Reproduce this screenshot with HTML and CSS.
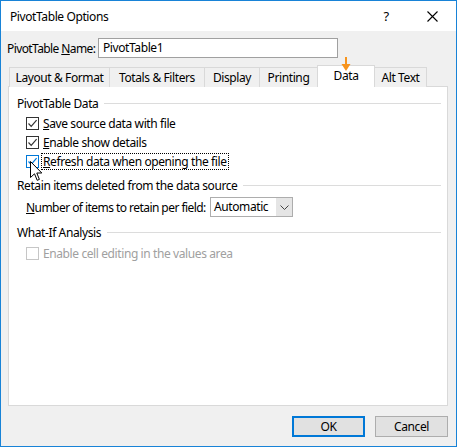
FILE: index.html
```html
<!DOCTYPE html>
<html>
<head>
<meta charset="utf-8">
<link rel="stylesheet" href="styles.css">
</head>
<body>
<div class="window">
  <div class="titlebar">
    <span class="title">PivotTable Options</span>
    <span class="help">?</span>
    <span class="close">
      <svg width="11" height="11" viewBox="0 0 11 11"><path d="M0.5 0.5 L10.5 10.5 M10.5 0.5 L0.5 10.5" stroke="#000" stroke-width="1.1" fill="none"/></svg>
    </span>
  </div>
  <div class="content">
    <div class="name-row">
      <span class="name-label">PivotTable <u>N</u>ame:</span>
      <div class="textbox">PivotTable1</div>
    </div>
    <div class="tabs">
      <div class="tab w1">Layout &amp; Format</div>
      <div class="tab w2">Totals &amp; Filters</div>
      <div class="tab w3">Display</div>
      <div class="tab w4">Printing</div>
      <div class="tab selected w5">Data
        <svg class="marker" width="10" height="15" viewBox="0 0 10 15"><path d="M5 0 V9" stroke="#f7941d" stroke-width="2"/><path d="M0.5 7 L9.5 7 L5 14 Z" fill="#f7941d"/></svg>
      </div>
      <div class="tab w6">Alt Text</div>
    </div>
    <div class="panel">
      <div class="group-head"><span>PivotTable Data</span><i class="rule"></i></div>
      <div class="check-row first">
        <span class="box"><svg width="11" height="11" viewBox="0 0 11 11"><path d="M1.5 5.5 L4.2 8.3 L9.6 2.2" stroke="#333" stroke-width="1.2" fill="none"/></svg></span>
        <span class="label"><u>S</u>ave source data with file</span>
      </div>
      <div class="check-row">
        <span class="box"><svg width="11" height="11" viewBox="0 0 11 11"><path d="M1.5 5.5 L4.2 8.3 L9.6 2.2" stroke="#333" stroke-width="1.2" fill="none"/></svg></span>
        <span class="label"><u>E</u>nable show details</span>
      </div>
      <div class="check-row">
        <span class="box hot"><svg width="11" height="11" viewBox="0 0 11 11"><path d="M1.5 5.5 L4.2 8.3 L9.6 2.2" stroke="#0078d7" stroke-width="1.2" fill="none"/></svg></span>
        <span class="label focus"><u>R</u>efresh data when opening the file</span>
        <svg class="cursor" width="13" height="21" viewBox="0 0 13 21"><path d="M0.5 0.5 L0.5 16.5 L4.5 12.8 L7.2 19.3 L9.4 18.4 L6.8 12 L11.8 12 Z" fill="#fff" stroke="#000" stroke-width="1" stroke-linejoin="miter"/></svg>
      </div>
      <div class="group-head second"><span>Retain items deleted from the data source</span><i class="rule"></i></div>
      <div class="select-row">
        <span class="select-label"><u>N</u>umber of items to retain per field:</span>
        <div class="select">
          <span class="select-value">Automatic</span>
          <span class="select-btn"><svg width="9" height="5" viewBox="0 0 9 5"><path d="M0.5 0.5 L4.5 4.5 L8.5 0.5" stroke="#444" stroke-width="1" fill="none"/></svg></span>
        </div>
      </div>
      <div class="group-head third"><span>What-If Analysis</span><i class="rule"></i></div>
      <div class="check-row disabled">
        <span class="box off"></span>
        <span class="label">Enable cell editing in the values area</span>
      </div>
    </div>
    <div class="buttons">
      <div class="btn default">OK</div>
      <div class="btn">Cancel</div>
    </div>
  </div>
</div>
</body>
</html>
```
FILE: styles.css
```css
html, body {
  margin: 0;
  padding: 0;
}
body {
  font-family: "Noto Sans", "Open Sans", sans-serif;
  font-size: 12px;
  letter-spacing: -0.4px;
  color: #000;
  background: #f0f0f0;
}
.window {
  box-sizing: border-box;
  width: 457px;
  height: 447px;
  border: 1px solid #1883d7;
  background: #f0f0f0;
  display: flex;
  flex-direction: column;
}
.titlebar {
  height: 30px;
  background: #fff;
  display: flex;
  align-items: center;
  padding-left: 9px;
  flex-shrink: 0;
}
.title {
  font-size: 12px;
  flex: 1;
}
.help {
  width: 46px;
  text-align: center;
  font-size: 13px;
  padding-left: 4px;
}
.close {
  width: 46px;
  display: flex;
  justify-content: center;
  align-items: center;
  padding-right: 1px;
}
.content {
  padding: 7px 9px 0 6px;
  display: flex;
  flex-direction: column;
}
.name-row {
  display: flex;
  align-items: center;
  height: 20px;
}
.name-label {
  width: 91px;
  white-space: nowrap;
  letter-spacing: -0.6px;
  box-sizing: border-box;
}
.textbox {
  box-sizing: border-box;
  width: 240px;
  height: 20px;
  border: 1px solid #a0a0a0;
  background: #fff;
  padding-left: 4px;
  line-height: 18px;
}
.tabs {
  display: flex;
  align-items: flex-end;
  height: 22px;
  margin-top: 7px;
  padding-left: 2px;
  position: relative;
  z-index: 1;
  margin-bottom: -1px;
}
.tab {
  box-sizing: border-box;
  height: 20px;
  border: 1px solid #d9d9d9;
  border-bottom: none;
  margin-left: -1px;
  text-align: center;
  line-height: 19px;
  background: #f0f0f0;
  white-space: nowrap;
}
.tab:first-child { margin-left: 0; }
.tab.selected {
  height: 22px;
  background: #fff;
  position: relative;
  line-height: 19px;
  z-index: 2;
}
.marker {
  position: absolute;
  left: 23px;
  top: -9px;
}
.w1 { width: 101px; }
.w2 { width: 96px; }
.w3 { width: 56px; }
.w4 { width: 59px; }
.w5 { width: 58px; }
.w6 { width: 53px; }
.panel {
  box-sizing: border-box;
  width: 440px;
  height: 320px;
  border: 1px solid #d9d9d9;
  background: #fff;
  padding: 8px 6px 0 8px;
  margin-left: 1px;
}
.group-head {
  display: flex;
  align-items: center;
  height: 16px;
}
.group-head span {
  white-space: nowrap;
  margin-right: 6px;
}
.group-head .rule {
  flex: 1;
  height: 1px;
  background: #dcdcdc;
}
.group-head.second { margin-top: 6px; }
.group-head.third { margin-top: 7px; }
.check-row {
  display: flex;
  align-items: center;
  height: 19px;
  padding-left: 9px;
  position: relative;
}
.check-row.first { margin-top: 3px; }
.box {
  box-sizing: border-box;
  width: 13px;
  height: 13px;
  border: 1px solid #333;
  background: #fff;
  display: flex;
  align-items: center;
  justify-content: center;
  margin-right: 4px;
  flex-shrink: 0;
}
.box.hot { border-color: #0078d7; }
.box.off { border-color: #c6c6c6; }
.label {
  white-space: nowrap;
  padding: 0 1px;
  margin-left: -1px;
}
.label.focus {
  outline: 1px dotted #000;
  outline-offset: 0;
  line-height: 15px;
}
.disabled { margin-top: 4px; }
.disabled .label { color: #a0a0a0; }
.cursor {
  position: absolute;
  left: 13px;
  top: 9px;
}
.select-row {
  display: flex;
  align-items: center;
  height: 20px;
  margin-top: 4px;
  padding-left: 9px;
}
.select-label {
  width: 184px;
  white-space: nowrap;
  letter-spacing: -0.55px;
}
.select {
  box-sizing: border-box;
  width: 83px;
  height: 20px;
  border: 1px solid #adadad;
  background: #fff;
  display: flex;
}
.select-value {
  flex: 1;
  padding-left: 3px;
  line-height: 18px;
}
.select-btn {
  width: 15px;
  background: #e5e5e5;
  display: flex;
  align-items: center;
  justify-content: center;
  border-left: 1px solid #e5e5e5;
}
.buttons {
  display: flex;
  justify-content: flex-end;
  gap: 10px;
  margin-top: 10px;
  margin-right: -1px;
}
.btn {
  box-sizing: border-box;
  width: 73px;
  height: 21px;
  border: 1px solid #adadad;
  background: #e1e1e1;
  text-align: center;
  line-height: 19px;
}
.btn.default {
  border: 2px solid #0078d7;
  line-height: 17px;
}
```
